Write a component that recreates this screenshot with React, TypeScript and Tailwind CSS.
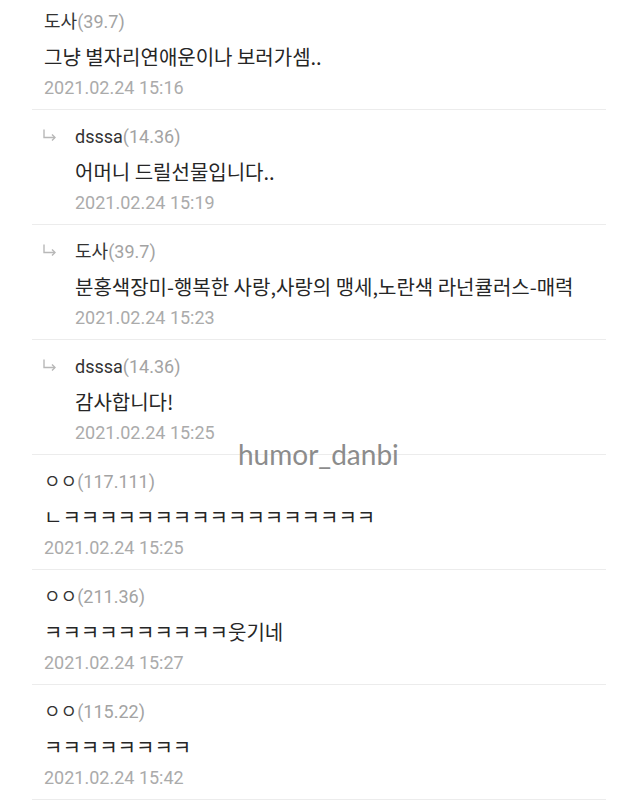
import React from 'react';

interface Comment {
    name: string;
    ip: string;
    text: string;
    date: string;
    reply?: boolean;
}

const comments: Comment[] = [
    { name: '도사', ip: '39.7', text: '그냥 별자리연애운이나 보러가셈..', date: '2021.02.24 15:16' },
    { name: 'dsssa', ip: '14.36', text: '어머니 드릴선물입니다..', date: '2021.02.24 15:19', reply: true },
    { name: '도사', ip: '39.7', text: '분홍색장미-행복한 사랑,사랑의 맹세,노란색 라넌큘러스-매력', date: '2021.02.24 15:23', reply: true },
    { name: 'dsssa', ip: '14.36', text: '감사합니다!', date: '2021.02.24 15:25', reply: true },
    { name: 'ㅇㅇ', ip: '117.111', text: 'ㄴㅋㅋㅋㅋㅋㅋㅋㅋㅋㅋㅋㅋㅋㅋㅋㅋㅋ', date: '2021.02.24 15:25' },
    { name: 'ㅇㅇ', ip: '211.36', text: 'ㅋㅋㅋㅋㅋㅋㅋㅋㅋㅋ웃기네', date: '2021.02.24 15:27' },
    { name: 'ㅇㅇ', ip: '115.22', text: 'ㅋㅋㅋㅋㅋㅋㅋㅋ', date: '2021.02.24 15:42' },
];

const ReplyArrow = () => (
    <svg width="15" height="13" viewBox="0 0 15 13" fill="none" stroke="#b8b8b8" strokeWidth="1.4" className="absolute left-[10px] top-[19px]">
        <path d="M2 0.5 V8.5 H13" />
        <path d="M10 5.5 L13 8.5 L10 11.5" />
    </svg>
);

const CommentRow: React.FC<{ c: Comment }> = ({ c }) => (
    <div className={`relative border-b border-[#ececec] pt-[15px] pb-[9px] ${c.reply ? 'pl-[43px]' : 'pl-[12px]'}`}>
        {c.reply && <ReplyArrow />}
        <div className="leading-[24px] text-[18px] font-['Roboto','Noto_Sans_CJK_KR',sans-serif]">
            <span className="text-[#333333]">{c.name}</span>
            <span className="text-[#a3a3a3]">({c.ip})</span>
        </div>
        <div className="mt-[9px] leading-[28px] text-[20px] text-[#262626] font-['Noto_Sans_CJK_KR','Noto_Sans',sans-serif]">
            {c.text}
        </div>
        <div className="mt-[5px] leading-[24px] text-[18px] text-[#ababab] font-['Roboto',sans-serif]">
            {c.date}
        </div>
    </div>
);

export default function App() {
    return (
        <div className="relative w-[640px] h-[800px] overflow-hidden bg-white">
            <div className="ml-[32px] w-[574px] -mt-[5px]">
                {comments.map((c, i) => (
                    <CommentRow key={i} c={c} />
                ))}
            </div>
            {/* watermark */}
            <div className="absolute left-[238px] top-[437px] text-[28px] leading-[34px] text-[#8c8c8c] font-['Lato',sans-serif]">
                humor_danbi
            </div>
        </div>
    );
}
